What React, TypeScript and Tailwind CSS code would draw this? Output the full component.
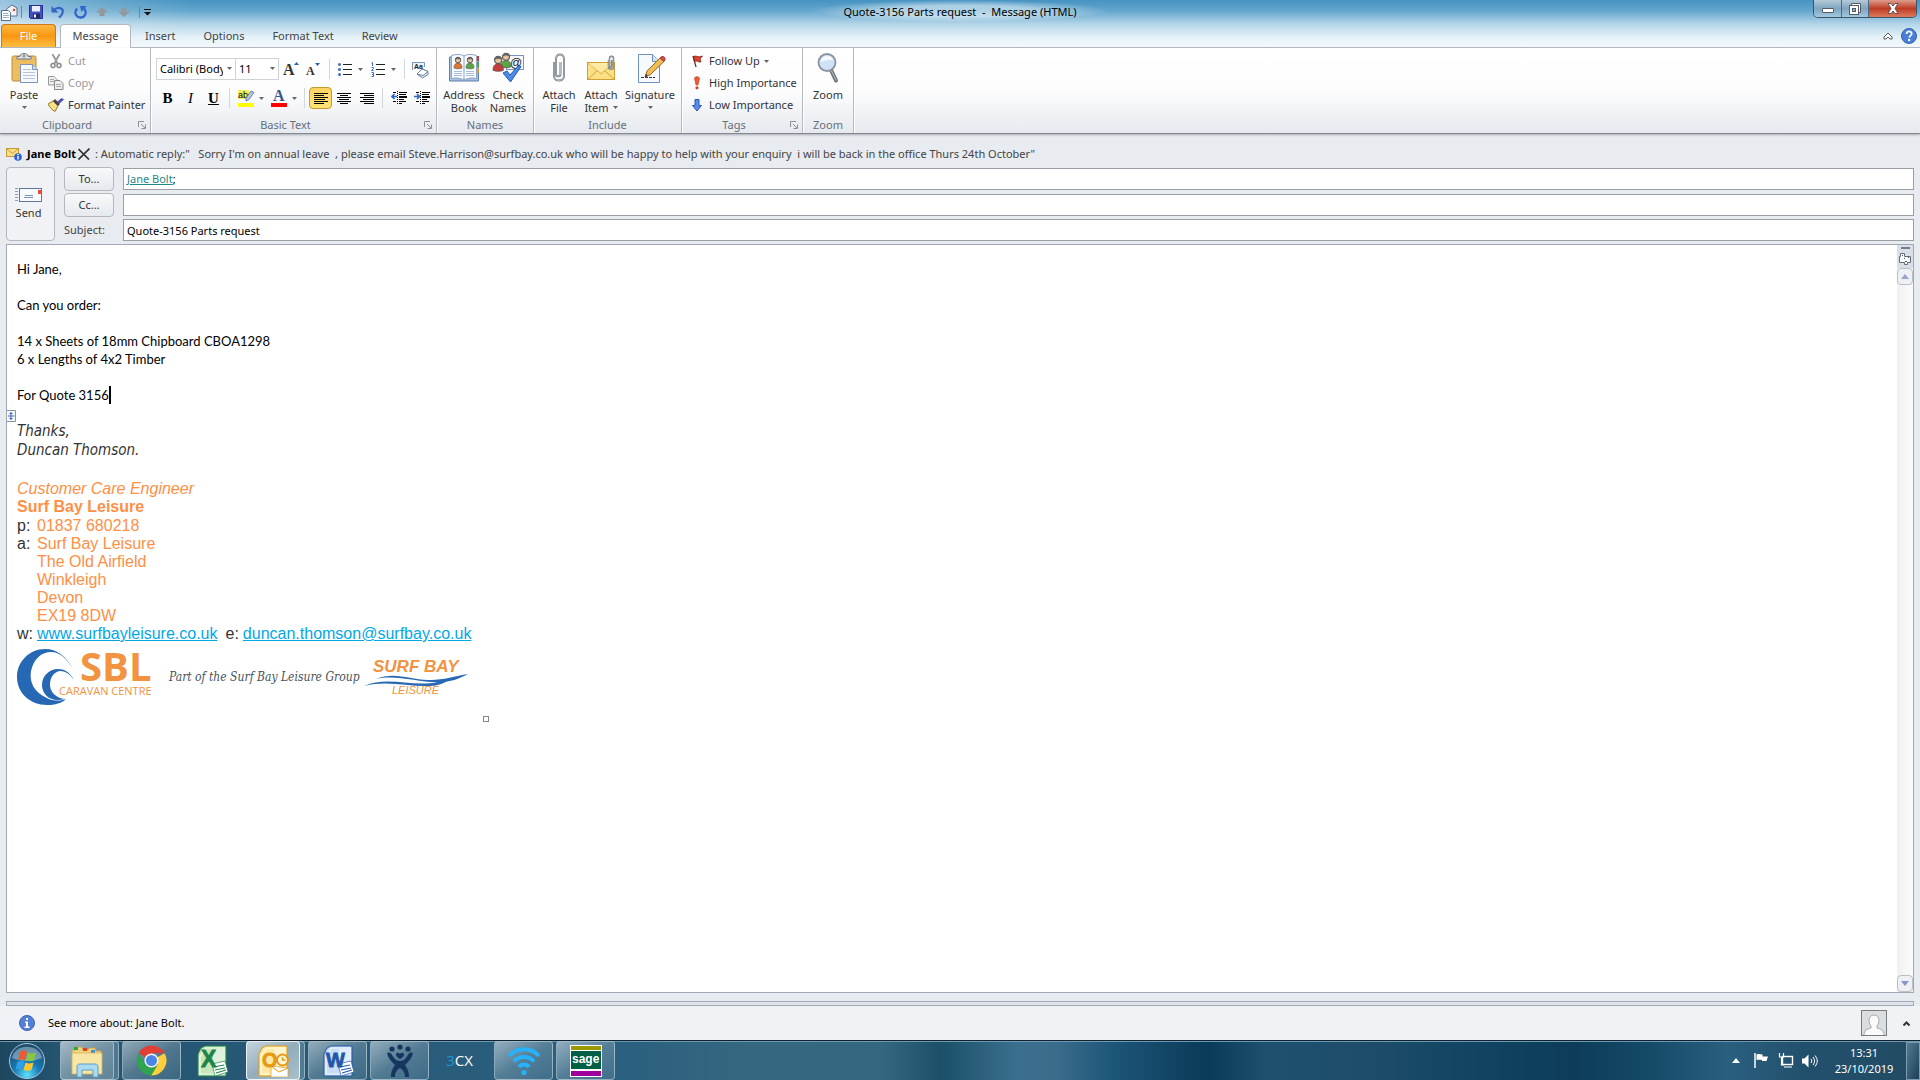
import type { ReactNode } from "react";

interface ChildrenProps {
  children: ReactNode;
}

/* Small shared pieces */

function Arrow() {
  return (
    <svg width="5" height="3" viewBox="0 0 5 3" aria-hidden="true">
      <path d="M0 0h5L2.5 3z" fill="#666" />
    </svg>
  );
}

function Launcher({ label }: { label: string }) {
  return (
    <button aria-label={label} className="absolute right-1 bottom-1 h-2 w-2">
      <svg width="8" height="8" viewBox="0 0 8 8">
        <path d="M.5 6V.5H6" fill="none" stroke="#8b9097" />
        <path d="M3 3l4 4M7.500 3.500v4h-4" fill="none" stroke="#8b9097" />
      </svg>
    </button>
  );
}

function Group({
  title,
  launcher,
  className = "",
  children,
}: ChildrenProps & { title: string; launcher?: boolean; className?: string }) {
  return (
    <section
      className={`relative flex shrink-0 flex-col border-r border-[#b5b9c0] pt-[2px] shadow-[1px_0_0_#fff] ${className}`}
    >
      <div className="h-[66px]">{children}</div>
      <h2 className={`h-[17px] text-center leading-[18px] text-[#666f7c] ${launcher ? "pr-4" : ""}`}>
        {title}
      </h2>
      {launcher && <Launcher label={`${title} options`} />}
    </section>
  );
}

function BigButton({
  icon,
  lines,
  arrow,
  className = "",
}: {
  icon: ReactNode;
  lines: string[];
  arrow?: "inline" | "below";
  className?: string;
}) {
  return (
    <button
      className={`flex flex-col items-center pt-[2px] leading-[13px] ${className}`}
    >
      <span className="mb-1 h-8 w-8">{icon}</span>
      {lines.map((line, i) => (
        <span key={line} className="flex items-center gap-1 whitespace-nowrap">
          {line}
          {arrow === "inline" && i === lines.length - 1 && <Arrow />}
        </span>
      ))}
      {arrow === "below" && (
        <span className="flex h-[13px] items-center">
          <Arrow />
        </span>
      )}
    </button>
  );
}

function RowButton({
  icon,
  children,
  disabled,
  arrow,
}: ChildrenProps & { icon: ReactNode; disabled?: boolean; arrow?: boolean }) {
  return (
    <button
      disabled={disabled}
      className="flex h-[22px] items-center gap-1 whitespace-nowrap disabled:text-[#9a9a9a]"
    >
      <span className="flex h-4 w-4 items-center justify-center">{icon}</span>
      {children}
      {arrow && <Arrow />}
    </button>
  );
}

function Tool({
  label,
  children,
  arrow,
  active,
}: ChildrenProps & { label: string; arrow?: boolean; active?: boolean }) {
  return (
    <button
      aria-label={label}
      className={`flex h-[22px] items-center justify-center gap-[5px] rounded-sm border ${
        arrow ? "w-[33px]" : "w-[23px]"
      } ${
        active
          ? "border-[#c29b29] bg-linear-to-b from-[#fcd163] to-[#ffe575]"
          : "border-transparent"
      }`}
    >
      {children}
      {arrow && <Arrow />}
    </button>
  );
}

function Separator() {
  return <span className="mx-1 h-5 w-px bg-[#d3d7dc]" />;
}

/* Icons */

function Lines({ rows }: { rows: [number, number][] }) {
  return (
    <svg width="14" height="13" viewBox="0 0 14 13">
      {rows.map(([x, w], i) => (
        <rect key={i} x={x} y={i * 2 + 1} width={w} height="1" fill="#000" />
      ))}
    </svg>
  );
}

function IndentIcon({ increase }: { increase?: boolean }) {
  return (
    <svg width="16" height="14" viewBox="0 0 16 14">
      <g fill="#000">
        <rect x="2" y="1" width="3" height="1" />
        <rect x="8" y="1" width="8" height="1" />
        <rect x="8" y="3" width="7" height="1" />
        <rect x="8" y="5" width="8" height="2" />
        <rect x="8" y="8" width="5" height="1" />
        <rect x="2" y="10" width="3" height="1" />
        <rect x="8" y="10" width="7" height="1" />
        <rect x="8" y="12" width="3" height="1" />
      </g>
      <path d="M6.500 0v14" stroke="#000" strokeDasharray="1 1" />
      <path
        d={increase ? "M0 5.500h5M3 3l2.500 2.500L3 8" : "M6 5.500H1M3.500 3L1 5.500 3.500 8"}
        stroke="#2f66c4"
        strokeWidth="1.600"
        fill="none"
      />
    </svg>
  );
}

function ListIcon({ numbered }: { numbered?: boolean }) {
  return (
    <svg width="15" height="15" viewBox="0 0 15 15">
      <path d="M5 2.500h9M5 7.500h9M5 12.500h9" stroke="#222" />
      {numbered ? (
        <path
          d="M.5 1l1-.5V4M.5 5.500h2v1l-2 2h2M.5 10.500h2v2h-1.500h1.500v2h-2"
          stroke="#3d6fbf"
          fill="none"
        />
      ) : (
        <g fill="#3d6fbf">
          <circle cx="1.500" cy="2.500" r="1.500" />
          <circle cx="1.500" cy="7.500" r="1.500" />
          <circle cx="1.500" cy="12.500" r="1.500" />
        </g>
      )}
    </svg>
  );
}

function PasteIcon() {
  return (
    <svg width="32" height="32" viewBox="0 0 32 32">
      <rect x="4" y="4" width="24" height="25" rx="1.500" fill="#edbd62" stroke="#bd8b3c" />
      <path d="M9 7V4.500h3C12 2 14 1.500 16 1.500s4 .5 4 3h3V7z" fill="#e6e8eb" stroke="#6f7680" />
      <circle cx="16" cy="4" r="1.200" fill="#fff" stroke="#6f7680" />
      <path d="M12.500 12.500h12l5 5v13h-17z" fill="#f6f9fd" stroke="#7b93b8" />
      <path d="M24.500 12.500v5h5" fill="#cfdcf0" stroke="#7b93b8" />
      <path d="M15 17.500h8M15 20.500h12M15 23.500h12M15 26.500h12" stroke="#b4c4dc" />
    </svg>
  );
}

function CutIcon() {
  return (
    <svg width="12" height="15" viewBox="0 0 12 15">
      <path d="M2.500 0l5 9.500M9.500 0l-5 9.500" stroke="#999" strokeWidth="1.800" />
      <circle cx="3" cy="11.500" r="2" fill="none" stroke="#888" strokeWidth="1.500" />
      <circle cx="9" cy="11.500" r="2" fill="none" stroke="#888" strokeWidth="1.500" />
    </svg>
  );
}

function CopyIcon() {
  return (
    <svg width="16" height="14" viewBox="0 0 16 14">
      <path d="M.5.500H6l3 3V9H.5z" fill="#eee" stroke="#999" />
      <path d="M2 3.500h4M2 5.500h4" stroke="#aaa" />
      <path d="M6.500 4.500H12l3 3v6H6.500z" fill="#eee" stroke="#888" />
      <path d="M8 8.500h5M8 10.500h5" stroke="#aaa" />
    </svg>
  );
}

function PainterIcon() {
  return (
    <svg width="16" height="14" viewBox="0 0 16 14">
      <path d="M0 6l5-3 5 5-3 5.500C4 12 1.500 9 0 6z" fill="#f5d97c" stroke="#9c7c2c" />
      <path d="M3 7l3 4M5 5l3 4" stroke="#fff3b8" />
      <path d="M5 3l2-2 5 5-2 2z" fill="#444" />
      <path d="M9.500 3.500L13.500 0 16 1.500 11 6z" fill="#4c50b8" />
    </svg>
  );
}

function FontSizeIcon({ shrink }: { shrink?: boolean }) {
  return (
    <svg width="16" height="16" viewBox="0 0 16 16" className="overflow-visible">
      <text
        x="0"
        y="14"
        fontSize={shrink ? 12 : 16}
        className="font-['Liberation_Serif',serif] font-bold"
        fill="#333"
      >
        A
      </text>
      <path d={shrink ? "M9 2h5l-2.500 3z" : "M11 4h5l-2.500-3z"} fill="#2f5db0" />
    </svg>
  );
}

function ClearIcon() {
  return (
    <svg width="17" height="17" viewBox="0 0 17 17" className="overflow-visible">
      <path d="M.5 9V1.500h12V6" fill="#eef3fb" stroke="#7e98c4" />
      <text x="2" y="8" fontSize="7" className="font-['Liberation_Sans',sans-serif] font-bold" fill="#222">
        Aa
      </text>
      <path d="M5 13l5-5 6 2.500v3L10.500 17z" fill="#dfe7f3" stroke="#6b7fa3" />
      <path d="M5 13l5-5 6 2.500-5 4z" fill="#fff" stroke="#6b7fa3" />
    </svg>
  );
}

function HighlightIcon() {
  return (
    <svg width="16" height="17" viewBox="0 0 16 17" className="overflow-visible">
      <rect width="11" height="9" fill="#f4ef5c" />
      <text x="0" y="8" fontSize="9" className="font-['Liberation_Sans',sans-serif]" fill="#000">
        ab
      </text>
      <path d="M8 8l5-7 3 1.500-5 7-3 1.500z" fill="#b9c6dc" stroke="#4d6b9e" strokeWidth=".8" />
      <rect y="13" width="16" height="4" fill="#ff0" />
    </svg>
  );
}

function FontColorIcon() {
  return (
    <svg width="16" height="17" viewBox="0 0 16 17" className="overflow-visible">
      <text x="2" y="11" fontSize="16" className="font-['Liberation_Serif',serif] font-bold" fill="#39568f">
        A
      </text>
      <rect y="13" width="16" height="4" fill="#f00" />
    </svg>
  );
}

function Person({ x, y, color }: { x: number; y: number; color: string }) {
  return (
    <g transform={`translate(${x} ${y})`}>
      <path d="M0 11c0-4 2-5 4-5s4 1 4 5c-2 1-6 1-8 0z" fill={color} stroke="#555" strokeWidth=".6" />
      <circle cx="4" cy="3" r="2.800" fill="#e3c49a" stroke="#555" strokeWidth=".9" />
      <path d="M1.200 3c0-4 5.600-4 5.600 0-2-1.500-4-1-5.600 0z" fill="#656565" />
    </g>
  );
}

function AddressBookIcon() {
  return (
    <svg width="32" height="32" viewBox="0 0 32 32">
      <path d="M1.500 5h29v24h-29z" fill="#a8c0e0" stroke="#5e7fae" />
      <path d="M29 4h2v5h-2z" fill="#d33" />
      <path d="M29 10h2v5h-2z" fill="#4a4" />
      <path d="M29 16h2v5h-2z" fill="#d93" />
      <path d="M3.500 3.500C8 2 13 2 16 4c3-2 8-2 12.500-.5v23C24 25.500 19 26 16 28c-3-2-8-2.500-12.500-1.500z" fill="#f7faff" stroke="#8ea5c8" />
      <path d="M16 4v24" stroke="#8ea5c8" />
      <path d="M6 19.500h8M6 21.500h8M6 23.500h8M18 19.500h8M18 21.500h8M18 23.500h8" stroke="#a9bcdb" />
      <Person x={6} y={5} color="#e2742c" />
      <Person x={18} y={5} color="#58a743" />
    </svg>
  );
}

function CheckNamesIcon() {
  return (
    <svg width="32" height="32" viewBox="0 0 32 32">
      <rect x="14.500" y="3.500" width="17" height="14" fill="#f3f7fd" stroke="#7b93b8" />
      <text x="18" y="15" fontSize="12" className="font-['Liberation_Sans',sans-serif]" fill="#222">
        @
      </text>
      <g transform="translate(9 1) scale(1.250)">
        <Person x={0} y={0} color="#58a743" />
      </g>
      <g transform="translate(1 4) scale(1.300)">
        <Person x={0} y={0} color="#c93b3b" />
      </g>
      <path d="M11 21l4-2 3 4 8-9 3 .5L18.500 30z" fill="#4d8ce6" stroke="#1d58b5" />
    </svg>
  );
}

function ClipIcon({ small }: { small?: boolean }) {
  const d = "M11 10v14c0 6 10 6 10 0V7c0-6-8-6-8 0v15c0 3 4.500 3 4.500 0V10";
  return (
    <g transform={small ? "translate(14 3) scale(.5)" : undefined}>
      <path d={d} fill="none" stroke="#707780" strokeWidth={small ? 3 : 2} />
      <path d={d} fill="none" stroke="#e5e8ec" strokeWidth=".6" />
    </g>
  );
}

function AttachFileIcon() {
  return (
    <svg width="32" height="32" viewBox="0 0 32 32">
      <ClipIcon />
    </svg>
  );
}

function AttachItemIcon() {
  return (
    <svg width="32" height="32" viewBox="0 0 32 32">
      <rect x="2.500" y="10.500" width="27" height="17" fill="#fce184" stroke="#d0a036" />
      <path d="M2.500 27.500l10-9M29.500 27.500l-10-9M2.500 10.500l13.500 11 13.500-11" fill="none" stroke="#cf9f38" />
      <path d="M3 11l13 10 13-10z" fill="#fdeaa3" />
      <g transform="translate(4)">
        <ClipIcon small />
      </g>
    </svg>
  );
}

function SignatureIcon() {
  return (
    <svg width="32" height="32" viewBox="0 0 32 32">
      <path d="M4.500 2.500h14l7 7v21h-21z" fill="#f7faff" stroke="#6d8fc2" />
      <path d="M18.500 2.500v7h7" fill="#d6e3f6" stroke="#6d8fc2" />
      <path d="M7 25.500h14" stroke="#333" strokeDasharray="3 1" />
      <path d="M11 25l2-6L26 6l4 3.500L16.500 22.500z" fill="#f0bc55" stroke="#8f6928" />
      <path d="M26 6l2-1.500c2-.5 3.500 1.500 3 3L30 9.500z" fill="#d94f4f" stroke="#a33" />
      <path d="M11 25l1-3 2 2z" fill="#333" />
    </svg>
  );
}

function FlagIcon() {
  return (
    <svg width="11" height="12" viewBox="0 0 11 12">
      <path d="M1.500 1.500C4 0 6 3 10.500 1L8 4l1 3C6 7.500 5 5 2.500 6.500z" fill="#e0402c" stroke="#8c2a1c" strokeWidth=".8" />
      <path d="M1 1l3 11" stroke="#7a2b20" strokeWidth="1.300" />
    </svg>
  );
}

function HighIcon() {
  return (
    <svg width="6" height="14" viewBox="0 0 6 14">
      <path d="M.5 2.500C.5 0 5.500 0 5.500 2.500L4 9H2z" fill="#ee5a35" stroke="#c03a1c" strokeWidth=".6" />
      <circle cx="3" cy="11.800" r="1.600" fill="#d8442a" />
    </svg>
  );
}

function LowIcon() {
  return (
    <svg width="10" height="13" viewBox="0 0 10 13">
      <path d="M3 .5h4v6h2.500L5 12 .5 6.500H3z" fill="#5b8be6" stroke="#2756b3" />
    </svg>
  );
}

function ZoomIcon() {
  return (
    <svg width="32" height="32" viewBox="0 0 32 32">
      <path d="M19 18l5 10.500" stroke="#666d77" strokeWidth="4" strokeLinecap="round" />
      <path d="M19.500 19l4.500 9" stroke="#a7adb5" strokeWidth="1.500" strokeLinecap="round" />
      <circle cx="15" cy="10.500" r="8.500" fill="#cfe2f8" stroke="#8b939e" strokeWidth="1.800" />
      <path d="M9 10c0-8 11-8 12-2-4 0-7 0-12 2z" fill="#f3f9ff" />
    </svg>
  );
}

/* Window chrome */

function QuickAccess() {
  return (
    <div className="flex h-6 items-center">
      <svg className="ml-px" width="17" height="17" viewBox="0 0 17 17">
        <path d="M5.500 5L11 1l5 3v8H6z" fill="#eef3fa" stroke="#5b6d88" />
        <circle cx="13" cy="6" r="1.300" fill="#e0502e" />
        <path d="M.5 6.500h7l2 2v8h-9z" fill="#fff" stroke="#5b6d88" />
        <path d="M2 9.500h5M2 11.500h6M2 13.500h6" stroke="#9fb0ca" />
      </svg>
      <span className="ml-[3px] h-3 w-px bg-[#6f8797]" />
      <button aria-label="Save" className="ml-[7px]">
        <svg width="14" height="14" viewBox="0 0 14 14">
          <path d="M.5.500h13v13h-12l-1-1z" fill="#4552c4" stroke="#252e8c" />
          <rect x="3" y="1" width="8" height="5.500" fill="#e9effb" />
          <rect x="4" y="8.500" width="7" height="5" fill="#222a66" />
          <rect x="5" y="9.500" width="2" height="3" fill="#fff" />
        </svg>
      </button>
      <button aria-label="Undo" className="ml-2">
        <svg width="14" height="14" viewBox="0 0 14 14">
          <path d="M3 5c4-4 10-2 8.500 3-.5 2-1.500 3-3.500 4.500" fill="none" stroke="#3565c8" strokeWidth="2.200" />
          <path d="M.5 1v6.500h7z" fill="#3565c8" />
        </svg>
      </button>
      <button aria-label="Redo" className="ml-[9px]">
        <svg width="13" height="14" viewBox="0 0 13 14">
          <path d="M3 3.500C-1 9 3.500 12.500 6.500 12.500c5 0 7-6 3-9.500" fill="none" stroke="#2f66d0" strokeWidth="2.300" />
          <path d="M6 1h6.500l-5 6z" fill="#2f66d0" />
        </svg>
      </button>
      <button aria-label="Previous item" className="ml-[9px]">
        <svg width="12" height="10" viewBox="0 0 12 10">
          <path d="M6 0l6 5.500H8.500V9h-5V5.500H0z" fill="#9098a0" />
        </svg>
      </button>
      <button aria-label="Next item" className="ml-[10px]">
        <svg width="12" height="10" viewBox="0 0 12 10">
          <path d="M6 10l6-5.500H8.500V1h-5v3.500H0z" fill="#9098a0" />
        </svg>
      </button>
      <span className="ml-[9px] h-3 w-px bg-[#6f8797]" />
      <button aria-label="Customize toolbar" className="ml-1">
        <svg width="7" height="7" viewBox="0 0 7 7">
          <path d="M0 0h7v1H0zM0 3h7L3.500 6.500z" fill="#111" />
        </svg>
      </button>
    </div>
  );
}

function WindowButtons() {
  return (
    <div className="mr-[3px] flex h-[18px] overflow-hidden rounded-b-[5px] border border-t-0 border-[#3c5568]">
      <button
        aria-label="Minimize"
        className="flex w-7 items-center justify-center border-r border-[#4d6a80] bg-linear-to-b from-[#b3cad9] via-[#7fa5bf] to-[#a3c9e0]"
      >
        <svg width="12" height="5" viewBox="0 0 12 5" className="mt-1">
          <rect x=".5" y=".5" width="11" height="4" rx=".5" fill="#fff" stroke="#555c66" />
        </svg>
      </button>
      <button
        aria-label="Restore"
        className="flex w-[27px] items-center justify-center border-r border-[#4d6a80] bg-linear-to-b from-[#b3cad9] via-[#7fa5bf] to-[#a3c9e0]"
      >
        <svg width="12" height="12" viewBox="0 0 12 12">
          <path d="M2.500 2.500v-2h9v9h-2" fill="#fff" stroke="#555c66" />
          <rect x=".5" y="2.500" width="9" height="9" fill="#fff" stroke="#555c66" />
          <rect x="3.500" y="5.500" width="3" height="3" fill="#8fb3cb" stroke="#555c66" />
        </svg>
      </button>
      <button
        aria-label="Close"
        className="flex w-[47px] items-center justify-center bg-linear-to-b from-[#dd9c8c] via-[#bd3a24] to-[#dc7a5c]"
      >
        <svg width="12" height="11" viewBox="0 0 12 11">
          <path d="M1 .5h3l2 2.500 2-2.500h3L8 5.500l3 5H8L6 8l-2 2.500H1l3-5z" fill="#fff" stroke="#5a4a4c" strokeWidth=".9" />
        </svg>
      </button>
    </div>
  );
}

function TitleBar() {
  return (
    <header className="bg-[linear-gradient(100deg,rgba(255,255,255,.45)_0,rgba(255,255,255,.25)_60px,transparent_190px),linear-gradient(to_bottom,#4693c1,#63a6cd_22%,#b3d5e8_50%,#e6f2f8_78%,#f5f9fc)]">
      <div className="flex items-start justify-between">
        <div className="flex-1">
          <QuickAccess />
        </div>
        <h1 className="bg-[radial-gradient(closest-side,rgba(255,255,255,.5)_50%,transparent)] px-8 pt-[2px] leading-5 whitespace-pre text-black">
          Quote-3156 Parts request  -  Message (HTML)
        </h1>
        <div className="flex flex-1 justify-end">
          <WindowButtons />
        </div>
      </div>
      <nav className="flex h-6 items-stretch border-b border-[#b3b8c0] text-[#444]">
        <button className="ml-px w-[55px] rounded-t-sm border border-b-0 border-[#d0761a] bg-linear-to-b from-[#fdb73f] via-[#f8960f] to-[#ffbf3e] text-white">
          File
        </button>
        <button className="-mb-px ml-1 w-[71px] rounded-t-sm border border-b-0 border-[#b3b8c0] bg-white">
          Message
        </button>
        {["Insert", "Options", "Format Text", "Review"].map((tab) => (
          <button key={tab} className="px-[14px] pt-px whitespace-nowrap">
            {tab}
          </button>
        ))}
        <div className="ml-auto flex items-center gap-2 pr-[3px]">
          <button aria-label="Minimize the ribbon">
            <svg width="10" height="8" viewBox="0 0 10 8">
              <path d="M1 5l4-4 4 4v2H7L5 5 3 7H1z" fill="#fff" stroke="#555" />
            </svg>
          </button>
          <button aria-label="Help">
            <svg width="16" height="16" viewBox="0 0 16 16">
              <circle cx="8" cy="8" r="7.500" fill="#4a7fd6" stroke="#3563ae" />
              <path d="M5.500 6c0-3.500 5.500-3.300 5.200 0-.2 1.500-2.200 1.800-2.500 3.500" fill="none" stroke="#fff" strokeWidth="1.800" />
              <circle cx="8.100" cy="12" r="1.200" fill="#fff" />
            </svg>
          </button>
        </div>
      </nav>
    </header>
  );
}

function Ribbon() {
  return (
    <div className="flex h-[86px] items-stretch border-b border-[#84898f] bg-linear-to-b from-white via-[#fdfdfe] to-[#e6e9ee] shadow-[0_1px_2px_#a9adb4]">
      <Group title="Clipboard" launcher className="w-[151px]">
        <div className="flex">
          <BigButton icon={<PasteIcon />} lines={["Paste"]} arrow="below" className="w-12" />
          <div>
            <RowButton icon={<CutIcon />} disabled>
              Cut
            </RowButton>
            <RowButton icon={<CopyIcon />} disabled>
              Copy
            </RowButton>
            <RowButton icon={<PainterIcon />}>Format Painter</RowButton>
          </div>
        </div>
      </Group>

      <Group title="Basic Text" launcher className="w-[286px]">
        <div className="flex items-center pt-2 pl-[5px]">
          <div className="relative">
            <select
              aria-label="Font"
              className="h-[22px] w-20 appearance-none border border-[#cfd3d8] bg-white pr-3 pl-[3px] text-black"
            >
              <option>Calibri (Body)</option>
            </select>
            <span className="pointer-events-none absolute top-[9px] right-1">
              <Arrow />
            </span>
          </div>
          <div className="relative -ml-px">
            <select
              aria-label="Font size"
              className="h-[22px] w-11 appearance-none border border-[#cfd3d8] bg-white pl-[3px] text-black"
            >
              <option>11</option>
            </select>
            <span className="pointer-events-none absolute top-[9px] right-1">
              <Arrow />
            </span>
          </div>
          <Tool label="Grow font">
            <FontSizeIcon />
          </Tool>
          <Tool label="Shrink font">
            <FontSizeIcon shrink />
          </Tool>
          <Separator />
          <Tool label="Bullets" arrow>
            <ListIcon />
          </Tool>
          <Tool label="Numbering" arrow>
            <ListIcon numbered />
          </Tool>
          <Separator />
          <Tool label="Clear formatting">
            <ClearIcon />
          </Tool>
        </div>
        <div className="flex items-center pt-[7px] pl-[5px] font-['Liberation_Serif',serif] text-[15px] text-black">
          <Tool label="Bold">
            <b>B</b>
          </Tool>
          <Tool label="Italic">
            <i>I</i>
          </Tool>
          <Tool label="Underline">
            <b className="underline">U</b>
          </Tool>
          <Separator />
          <Tool label="Highlight" arrow>
            <HighlightIcon />
          </Tool>
          <Tool label="Font color" arrow>
            <FontColorIcon />
          </Tool>
          <Separator />
          <Tool label="Align left" active>
            <Lines rows={[[0, 14], [0, 10], [0, 14], [0, 11], [0, 14], [0, 10]]} />
          </Tool>
          <Tool label="Center">
            <Lines rows={[[0, 14], [3, 8], [0, 14], [2, 10], [0, 14], [3, 8]]} />
          </Tool>
          <Tool label="Align right">
            <Lines rows={[[0, 14], [4, 10], [0, 14], [3, 11], [0, 14], [4, 10]]} />
          </Tool>
          <Separator />
          <Tool label="Decrease indent">
            <IndentIcon />
          </Tool>
          <Tool label="Increase indent">
            <IndentIcon increase />
          </Tool>
        </div>
      </Group>

      <Group title="Names" className="w-[97px]">
        <div className="flex pl-1">
          <BigButton icon={<AddressBookIcon />} lines={["Address", "Book"]} className="w-[46px]" />
          <BigButton icon={<CheckNamesIcon />} lines={["Check", "Names"]} className="w-[42px]" />
        </div>
      </Group>

      <Group title="Include" className="w-[148px]">
        <div className="flex pl-1">
          <BigButton icon={<AttachFileIcon />} lines={["Attach", "File"]} className="w-[42px]" />
          <BigButton icon={<AttachItemIcon />} lines={["Attach", "Item"]} arrow="inline" className="w-[42px]" />
          <BigButton icon={<SignatureIcon />} lines={["Signature"]} arrow="below" className="w-14" />
        </div>
      </Group>

      <Group title="Tags" launcher className="w-[121px]">
        <div className="pl-[7px]">
          <RowButton icon={<FlagIcon />} arrow>
            Follow Up
          </RowButton>
          <RowButton icon={<HighIcon />}>High Importance</RowButton>
          <RowButton icon={<LowIcon />}>Low Importance</RowButton>
        </div>
      </Group>

      <Group title="Zoom" className="w-[51px]">
        <BigButton icon={<ZoomIcon />} lines={["Zoom"]} className="w-full" />
      </Group>
    </div>
  );
}

/* Compose form */

function InfoBar() {
  return (
    <div className="flex h-[33px] items-center pt-[7px] pl-[6px] whitespace-pre text-[#444]">
      <svg width="16" height="14" viewBox="0 0 16 14">
        <rect x=".5" y="1.500" width="12" height="8" fill="#fbe08a" stroke="#c9972f" />
        <path d="M.5 1.500l6 5 6-5" fill="none" stroke="#c9972f" />
        <circle cx="12" cy="10" r="3.800" fill="#2b62d8" />
        <path d="M12 7v1.200M12 9v3.500" stroke="#fff" strokeWidth="1.400" />
      </svg>
      <b className="ml-[5px] text-black">Jane Bolt</b>
      <svg className="mx-[2px]" width="12" height="12" viewBox="0 0 12 12">
        <path d="M.5 1L11 11.500M11.500.5L.5 11.500" stroke="#333" strokeWidth="1.700" />
      </svg>
      <span>
        {" : Automatic reply:\"   Sorry I'm on annual leave  , please email Steve.Harrison@surfbay.co.uk who will be happy to help with your enquiry  i will be back in the office Thurs 24th October\""}
      </span>
    </div>
  );
}

const fieldButton =
  "h-6 rounded-sm border border-[#b4b8bd] bg-linear-to-b from-[#f8f9fb] to-[#e6e9ed]";
const fieldBox =
  "h-[22px] w-full border border-[#9a9fa5] bg-white px-[3px] text-black outline-none";

function AddressForm() {
  return (
    <form className="flex gap-[9px] px-[6px]" onSubmit={(e) => e.preventDefault()}>
      <button className="flex w-[49px] flex-col items-center justify-center gap-[2px] rounded-sm border border-[#b4b8bd] bg-[#f1f2f5] pt-px pr-1 text-[#333]">
        <svg width="28" height="15" viewBox="0 0 28 15">
          <path d="M0 .5h3M0 3.500h3M0 6.500h3M0 9.500h3M0 12.500h3" stroke="#8a9cc0" />
          <rect x="4.500" y=".5" width="22" height="13" fill="#f8fafe" stroke="#5f7698" />
          <rect x="23" y="2" width="3" height="4" fill="#e24f32" />
          <path d="M10 7.500h8M9 9.500h9" stroke="#7d92b8" />
        </svg>
        Send
      </button>
      <div className="grid flex-1 grid-cols-[50px_1fr] items-center gap-x-[9px] gap-y-[2px]">
        <button className={fieldButton}>To...</button>
        <div className={`flex items-center ${fieldBox}`}>
          <a href="#jane-bolt" className="text-[#1f8a88] underline">
            Jane Bolt
          </a>
          ;
        </div>
        <button className={fieldButton}>Cc...</button>
        <input aria-label="Cc" className={fieldBox} />
        <label htmlFor="subject" className="text-[#444]">
          Subject:
        </label>
        <input id="subject" className={fieldBox} defaultValue="Quote-3156 Parts request" />
      </div>
    </form>
  );
}

function SblLogo() {
  return (
    <svg
      width="136"
      height="58"
      viewBox="0 0 136 58"
      role="img"
      aria-label="SBL Caravan Centre"
      className="overflow-visible"
    >
      <path
        d="M56 21C49 8 40 1 28 1 12 1 0 14 0 29c0 16 13 28 30 28 8 0 15-2 19-6-9 3-17 1-21-2C18 44 12 35 14 23 17 10 25 4 34 4c9 0 16 7 22 17z"
        fill="#2668b4"
      />
      <path
        d="M57 32c-4-8-10-11-16-11-9 0-16 7-16 16 0 10 9 18 23 14-9-1-15-7-15-14 0-8 4-13 10-14 5 0 10 3 14 9z"
        fill="#2668b4"
      />
      <text x="63" y="33" fontSize="40" className="font-['Open_Sans',sans-serif] font-bold" fill="#f19340">
        SBL
      </text>
      <text x="42" y="47" fontSize="11" className="font-['Open_Sans',sans-serif]" fill="#f19340">
        CARAVAN CENTRE
      </text>
    </svg>
  );
}

function SurfBayLogo() {
  return (
    <svg width="106" height="40" viewBox="0 0 106 40" role="img" aria-label="Surf Bay Leisure">
      <text x="9" y="15" fontSize="17" className="font-['Liberation_Sans',sans-serif] font-bold italic" fill="#f19340">
        SURF BAY
      </text>
      <path d="M12 22c20-8 35 2 55 1 12 0 25-4 37-6-9 5-18 8-28 8-20 1-44-8-64-3z" fill="#2668b4" />
      <path d="M0 29c22-10 45 0 68-3 8-1 14-3 18-4-5 4-12 7-20 7-22 1-42-6-66 0z" fill="#2668b4" />
      <text x="28" y="37" fontSize="11" className="font-['Liberation_Sans',sans-serif] italic" fill="#f19340">
        LEISURE
      </text>
    </svg>
  );
}

function Signature() {
  return (
    <div className="relative mt-[18px] w-fit min-w-[468px] font-['Liberation_Sans',sans-serif] text-[16px] leading-[18px] text-[#ff8f45]">
      <svg className="absolute -top-[12px] -left-[10px]" width="9" height="12" viewBox="0 0 9 12">
        <path d="M0 .5h8.500v11H0" fill="#f4f6fa" stroke="#8c929c" />
        <path d="M1 6h6.500M4 2v8M2.500 3.500h3M2.500 8.500h3" stroke="#3d66b8" />
      </svg>
      <div className="pb-5 font-['DejaVu_Sans_Condensed','DejaVu_Sans',sans-serif] text-[15px] leading-[19px] text-[#333] italic">
        <p>Thanks,</p>
        <p>Duncan Thomson.</p>
      </div>
      <p className="italic">Customer Care Engineer</p>
      <p className="font-bold">Surf Bay Leisure</p>
      <dl className="mt-px grid grid-cols-[20px_1fr]">
        <dt className="text-[#333]">p:</dt>
        <dd>01837 680218</dd>
        <dt className="text-[#333]">a:</dt>
        <dd>
          Surf Bay Leisure
          <br />
          The Old Airfield
          <br />
          Winkleigh
          <br />
          Devon
          <br />
          EX19 8DW
        </dd>
        <dt className="text-[#333]">w:</dt>
        <dd className="flex gap-2 text-[#333]">
          <a href="#website" className="text-[#00a8e8] underline">
            www.surfbayleisure.co.uk
          </a>
          <span className="flex gap-1">
            e:
            <a href="#email" className="text-[#00a8e8] underline">
              duncan.thomson@surfbay.co.uk
            </a>
          </span>
        </dd>
      </dl>
      <div className="mt-[5px] flex items-center">
        <SblLogo />
        <span className="ml-4 font-['DejaVu_Serif_Condensed','DejaVu_Serif',serif] text-[12px] whitespace-nowrap text-[#47545e] italic">
          Part of the Surf Bay Leisure Group
        </span>
        <span className="ml-1">
          <SurfBayLogo />
        </span>
      </div>
      <span className="absolute -right-1 -bottom-4 h-[6px] w-[6px] border border-[#888] bg-white" />
    </div>
  );
}

function ScrollBar() {
  return (
    <div className="flex w-4 flex-col justify-between bg-linear-to-r from-[#f0f1f3] to-[#fbfbfc]">
      <div>
        <div className="flex h-[23px] flex-col items-center gap-1 bg-[#d9dfe7] pt-[2px]">
          <span className="h-[2px] w-[9px] bg-[#767d87]" />
          <svg width="12" height="12" viewBox="0 0 12 12">
            <path d="M1.500 3.500v-3h4v3h6v6h-3v2h-3v-2h-5v-6z" fill="#f8f9fb" stroke="#666d78" />
            <path d="M3 2.500h1M5 5.500h1M9 4.500h1M6 8.500h2" stroke="#555" />
          </svg>
        </div>
        <button
          aria-label="Scroll up"
          className="flex h-[17px] w-4 items-center justify-center rounded-sm border border-[#babec5] bg-[#eef0f3]"
        >
          <svg width="8" height="5" viewBox="0 0 8 5">
            <path d="M0 5h8L4 0z" fill="#98a5c8" />
          </svg>
        </button>
      </div>
      <button
        aria-label="Scroll down"
        className="flex h-[17px] w-4 items-center justify-center rounded-sm border border-[#babec5] bg-[#eef0f3]"
      >
        <svg width="8" height="5" viewBox="0 0 8 5">
          <path d="M0 0h8L4 5z" fill="#8796c4" />
        </svg>
      </button>
    </div>
  );
}

function MessageBody() {
  return (
    <main className="mx-[6px] mt-[3px] flex flex-1 border border-[#a3a9b4] bg-white">
      <article className="flex-1 px-[10px] pt-[15px] pb-6 font-['Lato',sans-serif] text-[13px] leading-[18px] text-black">
        <p>Hi Jane,</p>
        <p className="mt-[18px]">Can you order:</p>
        <p className="mt-[18px]">
          14 x Sheets of 18mm Chipboard CBOA1298
          <br />6 x Lengths of 4x2 Timber
        </p>
        <p className="mt-[18px] flex items-center">
          For Quote 3156
          <span className="h-[18px] w-[2px] bg-black" />
        </p>
        <Signature />
      </article>
      <ScrollBar />
    </main>
  );
}

function PeoplePane() {
  return (
    <footer className="bg-[#f1f2f5]">
      <div className="bg-[#e8ebf0] px-[6px] pt-2">
        <div className="h-[5px] border border-[#a3a9b4] bg-[#dfe4ea]" />
      </div>
      <div className="flex h-[34px] items-center pr-[10px] pl-[19px] text-black">
        <svg width="16" height="16" viewBox="0 0 16 16">
          <circle cx="8" cy="8" r="7.500" fill="#557fd6" stroke="#3d62b5" />
          <path d="M7 3h2v2H7zM6 6.500h3v5h1.500V13h-5v-1.500H7V8H6z" fill="#fff" />
        </svg>
        <span className="ml-[13px]">See more about: Jane Bolt.</span>
        <svg className="ml-auto" width="26" height="26" viewBox="0 0 26 26">
          <rect x=".5" y=".5" width="25" height="25" fill="#dcdddf" stroke="#777b80" />
          <path
            d="M3 25c0-5 3-6 7-7v-2c-3-3-3-11 3-11s6 8 3 11v2c4 1 7 2 7 7"
            fill="#fafafa"
            stroke="#a4a8ad"
          />
        </svg>
        <button aria-label="Expand people pane" className="ml-4">
          <svg width="7" height="5" viewBox="0 0 7 5">
            <path d="M.5 4.500l3-3 3 3" fill="none" stroke="#333" strokeWidth="2" />
          </svg>
        </button>
      </div>
    </footer>
  );
}

/* Windows taskbar */

function ExplorerIcon() {
  return (
    <svg width="34" height="34" viewBox="0 0 34 34">
      <path d="M2 6h3l1-3h6l1 3h5l1-2h6l1 3h5v22H2z" fill="#f0d27c" stroke="#c5a14a" strokeWidth=".8" />
      <path d="M4 3h4v3H4z" fill="#2da54a" />
      <path d="M13 4h4v3h-4z" fill="#d8452e" />
      <path d="M21 6h4v3h-4z" fill="#3a8edb" />
      <path d="M2 9h30v21H2z" fill="#f8e6a4" stroke="#d3b45f" strokeWidth=".8" />
      <path d="M7 33V23c0-2 1-3 3-3h15c2 0 3 1 3 3v10h-5v-7H12v7z" fill="#a9dbf3" stroke="#5e9fc4" />
    </svg>
  );
}

function ChromeIcon() {
  return (
    <svg width="31" height="31" viewBox="0 0 32 32">
      <path d="M16 16L2.500 8.500A15.500 15.500 0 0 1 29.500 8.500H16z" fill="#e04034" />
      <path d="M16 16l13.500-7.500A15.500 15.500 0 0 1 15.500 31.500l7-11.500z" fill="#fbd03e" />
      <path d="M2.500 8.500A15.500 15.500 0 0 0 15.500 31.500L22 21l-12-1z" fill="#2fa350" />
      <circle cx="16" cy="16" r="7.300" fill="#f4f4f4" />
      <circle cx="16" cy="16" r="5.700" fill="#4a86ea" />
    </svg>
  );
}

function OfficeIcon({
  letter,
  color,
  tint,
}: {
  letter: string;
  color: string;
  tint: string;
}) {
  return (
    <svg width="32" height="32" viewBox="0 0 32 32">
      <path d="M5 3l4-2h21v30H2V9z" fill={tint} stroke={color} />
      <path d="M5.500 9l4-6H28v26H4V12z" fill="none" stroke="#fff" strokeWidth="1.200" opacity=".8" />
      <path d="M17 4h10v24H17z" fill="#fff" opacity=".45" />
      {letter === "O" ? (
        <g>
          <path d="M14 21l17 2v9H14z" fill="#fff" stroke={color} strokeWidth=".7" />
          <path d="M14 21l8 6 9-4" fill="none" stroke={color} />
          <circle cx="25.500" cy="15" r="5.500" fill="#fff6dc" stroke={color} strokeWidth="2" />
          <path d="M25.500 12v3h3" fill="none" stroke={color} strokeWidth="1.500" />
        </g>
      ) : (
        <g>
          <path d="M16 19l13-3 3 11-13 4z" fill="#fff" stroke={color} strokeWidth=".7" />
          <path d="M18 22l10-2M19 25l10-2M20 28l10-3" stroke={color} strokeWidth="1.200" />
        </g>
      )}
      <text
        x={letter === "W" ? 4 : 5}
        y="22"
        fontSize={letter === "X" ? 23 : 20}
        className="font-['Liberation_Sans',sans-serif] font-bold"
        fill={color}
        stroke={color}
        strokeWidth=".8"
      >
        {letter}
      </text>
    </svg>
  );
}

function JiraIcon() {
  return (
    <svg width="26" height="34" viewBox="0 0 26 34">
      <g fill="#17365f">
        <circle cx="5" cy="5" r="2.600" />
        <circle cx="13" cy="3" r="2.600" />
        <circle cx="21" cy="5" r="2.600" />
        <path d="M0 9c3-1 4 0 5 2 2 3 4 6 8 6s6-3 8-6c1-2 2-3 5-2-1 5-4 8-8 12 2 3 4 6 4 12h-4c0-5-2-7-5-9-3 2-5 4-5 9H4c0-6 2-9 4-12C4 17 1 14 0 9z" />
        <path d="M13 15c-4-2-5-5-3-6 1-.5 2 0 3 1 1-1 2-1.500 3-1 2 1 1 4-3 6z" />
      </g>
    </svg>
  );
}

function WifiIcon() {
  return (
    <svg width="34" height="30" viewBox="0 0 34 30">
      <g fill="none" stroke="#27b2fa" strokeWidth="4">
        <path d="M2 10C10 1 24 1 32 10" />
        <path d="M7 15.500c5-6 15-6 20 0" />
        <path d="M12 21c2.500-3.500 7.500-3.500 10 0" />
      </g>
      <circle cx="17" cy="26.500" r="2.600" fill="#27b2fa" />
    </svg>
  );
}

function SageIcon() {
  return (
    <svg width="32" height="32" viewBox="0 0 32 32">
      <rect width="32" height="32" fill="#fff" />
      <rect x="1" y="1" width="30" height="4" fill="#9a9a00" />
      <rect x="1" y="6" width="30" height="18" fill="#006046" />
      <text x="2" y="18" fontSize="12" className="font-['Liberation_Sans',sans-serif] font-bold" fill="#fff">
        sage
      </text>
      <rect x="1" y="26" width="30" height="5" fill="#a0009b" />
    </svg>
  );
}

const apps: { name: string; icon: ReactNode; state?: "open" | "stack" | "active" }[] = [
  { name: "Explorer", icon: <ExplorerIcon />, state: "stack" },
  { name: "Chrome", icon: <ChromeIcon />, state: "open" },
  { name: "Excel", icon: <OfficeIcon letter="X" color="#1e8449" tint="#c5e6bc" /> },
  { name: "Outlook", icon: <OfficeIcon letter="O" color="#e59a13" tint="#fde9a3" />, state: "active" },
  { name: "Word", icon: <OfficeIcon letter="W" color="#2156a8" tint="#c7dcf6" />, state: "open" },
  { name: "Jira", icon: <JiraIcon />, state: "open" },
  {
    name: "3CX",
    icon: (
      <span className="font-['Open_Sans',sans-serif] text-[15px] text-white">
        <span className="text-[#1c98d8]">3</span>CX
      </span>
    ),
  },
  { name: "Wireless", icon: <WifiIcon />, state: "open" },
  { name: "Sage", icon: <SageIcon />, state: "open" },
];

function TaskButton({ name, icon, state }: (typeof apps)[number]) {
  const stacked = state === "stack" || state === "active";
  return (
    <div
      className={`flex h-[39px] w-[59px] ${
        stacked ? "rounded-sm border border-[#c3d5e0]/60 border-l-0 bg-white/20" : ""
      }`}
    >
      <button
        aria-label={name}
        className={`flex flex-1 items-center justify-center rounded-sm ${
          state === "active"
            ? "border border-white/80 bg-linear-to-br from-[#c5d4dd] via-[#93adbc] to-[#a9bfcb]"
            : state
            ? "border border-[#a9c2cf]/70 bg-linear-to-br from-white/50 via-white/20 to-white/10"
            : "pr-1"
        } ${stacked ? "mr-1 -my-px" : ""}`}
      >
        {icon}
      </button>
    </div>
  );
}

function Taskbar() {
  return (
    <div className="flex h-10 items-stretch border-t border-[#10222e] bg-[linear-gradient(to_right,#1d475f_0,#245470_3%,#2b6080_33%,#35687f_39%,#33677f_46%,#1b5068_49%,#3b6f8f_53%,#3b6c8c_55%,#1d5678_58%,#0e3e5e_62%,#0b3b5a_63%,#1f5070_66%,#1e4d6b_71%,#124664_76%,#0c3c5a_82%,#154a69_86%,#2a5f80_90%,#22506c_94%,#224b63)] shadow-[inset_0_1px_0_#6f9ab3]">
      <button aria-label="Start" className="ml-2">
        <svg width="38" height="38" viewBox="0 0 38 38">
          <defs>
            <radialGradient id="orb" cx="50%" cy="90%" r="85%">
              <stop offset="0" stopColor="#5fe0fb" />
              <stop offset=".45" stopColor="#1779b5" />
              <stop offset="1" stopColor="#204c6c" />
            </radialGradient>
          </defs>
          <circle cx="19" cy="19" r="17.500" fill="url(#orb)" stroke="#a5c8dc" />
          <path d="M4 16C7 1 31 1 34 16c-9 4-21 4-30 0z" fill="#fff" opacity=".35" />
          <path d="M12 10c3-2 5-1 7 0l-2 8c-2-1-5-1-7 0z" fill="#ef5a2b" />
          <path d="M20 10.500c3 1.500 5 1 8 0l-2 8c-3 1-5 1-8 0z" fill="#8cc63f" />
          <path d="M9.500 20c3-1.500 5-1 7 0l-2 7.500c-2-1-4-1-7 0z" fill="#2fa0e8" />
          <path d="M17.500 20.500c3 1.500 5 1 8 0l-2 7.500c-3 1-5 1-8 0z" fill="#fdc82f" />
        </svg>
      </button>
      <div className="ml-[14px] flex gap-[3px]">
        {apps.map((app) => (
          <TaskButton key={app.name} {...app} />
        ))}
      </div>
      <div className="ml-auto flex items-center text-white">
        <button aria-label="Show hidden icons">
          <svg width="8" height="5" viewBox="0 0 8 5">
            <path d="M0 5h8L4 0z" fill="#fff" />
          </svg>
        </button>
        <svg className="ml-[14px]" width="15" height="15" viewBox="0 0 15 15">
          <path d="M1 0v15" stroke="#fff" strokeWidth="1.500" />
          <path d="M2.500 1.500c3-1 4 0 6 0v2h5.500l-1.500 4.500H8V7c-2 0-3-.5-5.500 0z" fill="#fff" />
        </svg>
        <svg className="ml-[9px]" width="16" height="15" viewBox="0 0 16 15">
          <rect x="4.500" y="3.500" width="10" height="8" fill="none" stroke="#fff" strokeWidth="1.400" />
          <path d="M6 14h8M1.500 0v4h4V0M3.500 4v8h3" stroke="#fff" strokeWidth="1.200" fill="none" />
        </svg>
        <svg className="ml-2" width="16" height="14" viewBox="0 0 16 14">
          <path d="M0 4.500h2.500L6.500.5v13l-4-4H0z" fill="#fff" />
          <path d="M9 5c1 1.500 1 2.500 0 4M11 3c2 3 2 5 0 8M13 1.500c3 4 3 7 0 11" fill="none" stroke="#fff" />
        </svg>
        <time className="ml-4 w-[60px] text-center text-[11px] leading-4">
          13:31
          <br />
          23/10/2019
        </time>
        <button
          aria-label="Show desktop"
          className="ml-3 h-[38px] w-[14px] border border-[#7d9cae] bg-linear-to-br from-[#547a90] to-[#1c4058]"
        />
      </div>
    </div>
  );
}

export default function App() {
  return (
    <div className="flex min-h-screen flex-col bg-[#e8ebf0] font-['Noto_Sans',sans-serif] text-[11px] text-[#333]">
      <TitleBar />
      <Ribbon />
      <InfoBar />
      <AddressForm />
      <MessageBody />
      <PeoplePane />
      <Taskbar />
    </div>
  );
}
